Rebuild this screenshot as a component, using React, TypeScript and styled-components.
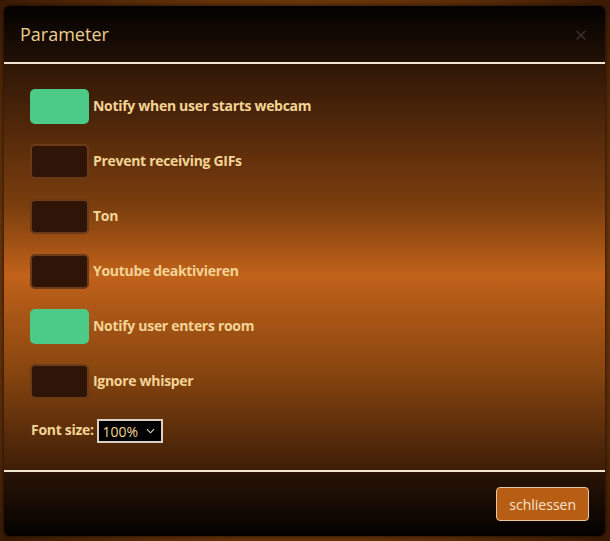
import { useState } from "react";
import styled, { createGlobalStyle } from "styled-components";

const GlobalStyle = createGlobalStyle`
  html, body {
    margin: 0;
    padding: 0;
  }
  body {
    background: radial-gradient(ellipse at 50% 50%, #b8621c 0%, #7a3e0c 60%, #3a1a04 100%);
    font-family: "Open Sans", "Liberation Sans", sans-serif;
  }
`;

const options = [
  { label: "Notify when user starts webcam", on: true },
  { label: "Prevent receiving GIFs", on: false },
  { label: "Ton", on: false },
  { label: "Youtube deaktivieren", on: false },
  { label: "Notify user enters room", on: true },
  { label: "Ignore whisper", on: false },
];

export default function App() {
  const [values, setValues] = useState(options.map((o) => o.on));

  function toggle(index: number) {
    setValues((prev) => prev.map((v, i) => (i === index ? !v : v)));
  }

  return (
    <>
      <GlobalStyle />
      <Page>
        <Modal>
          <Header>
            <Title>Parameter</Title>
            <Close>×</Close>
          </Header>

          <Body>
            {options.map((option, index) => (
              <Row key={option.label}>
                <Toggle $on={values[index]} onClick={() => toggle(index)} />
                <Label>{option.label}</Label>
              </Row>
            ))}

            <FontRow>
              <Label>Font size:</Label>
              <SelectWrap>
                <Select defaultValue="100%">
                  <option>80%</option>
                  <option>90%</option>
                  <option>100%</option>
                  <option>110%</option>
                  <option>120%</option>
                </Select>
                <Chevron viewBox="0 0 10 6">
                  <path d="M1 1l4 4 4-4" fill="none" stroke="#e8dcc8" strokeWidth="1.2" />
                </Chevron>
              </SelectWrap>
            </FontRow>
          </Body>

          <Footer>
            <CloseButton>schliessen</CloseButton>
          </Footer>
        </Modal>
      </Page>
    </>
  );
}

const Page = styled.div`
  width: 610px;
  height: 541px;
  padding: 6px 5px 5px 4px;
  box-sizing: border-box;
`;

const Modal = styled.div`
  height: 100%;
  display: flex;
  flex-direction: column;
  border-radius: 6px;
  overflow: hidden;
  box-shadow: 0 0 4px rgba(0, 0, 0, 0.8);
  background: #2a1406;
`;

const Header = styled.div`
  height: 56px;
  display: flex;
  align-items: center;
  justify-content: space-between;
  padding: 0 16px;
  background: linear-gradient(to bottom, #030100, #221106);
  border-bottom: 2px solid #f3e6d0;
`;

const Title = styled.h4`
  margin: 0;
  font-size: 18px;
  font-weight: 400;
  color: #efcf8e;
`;

const Close = styled.span`
  font-size: 22px;
  color: #3c3026;
  line-height: 1;
  margin-right: 2px;
`;

const Body = styled.div`
  flex: 1;
  display: flex;
  flex-direction: column;
  gap: 20px;
  padding: 25px 26px 0;
  background: linear-gradient(
    to bottom,
    #2e1606 0%,
    #7c3e0e 35%,
    #c0621a 52%,
    #8a460f 75%,
    #3e1e07 100%
  );
`;

const Row = styled.div`
  display: flex;
  align-items: center;
  gap: 4px;
`;

const Toggle = styled.div<{ $on: boolean }>`
  width: 59px;
  height: 35px;
  box-sizing: border-box;
  border-radius: 5px;
  cursor: pointer;
  background: ${(p) => (p.$on ? "#4ccb88" : "#2e1507")};
  border: ${(p) => (p.$on ? "none" : "2px solid #6b3a18")};
`;

const Label = styled.span`
  font-size: 14px;
  font-weight: 700;
  color: #f3d495;
  letter-spacing: -0.3px;
  margin-bottom: 3px;
`;

const FontRow = styled.div`
  display: flex;
  align-items: center;
  gap: 3px;
  padding-left: 1px;
`;

const SelectWrap = styled.div`
  position: relative;
  display: flex;
`;

const Select = styled.select`
  appearance: none;
  height: 24px;
  width: 66px;
  background: #000;
  color: #f3d495;
  border: 2px solid #d8d0c4;
  font-family: "Open Sans", "Liberation Sans", sans-serif;
  font-size: 14px;
  padding: 0 4px;
  border-radius: 0;
`;

const Chevron = styled.svg`
  position: absolute;
  right: 8px;
  top: 9px;
  width: 9px;
  height: 6px;
  pointer-events: none;
`;

const Footer = styled.div`
  height: 64px;
  display: flex;
  align-items: center;
  justify-content: flex-end;
  padding: 0 16px;
  border-top: 2px solid #f3e6d0;
  background: linear-gradient(to bottom, #2a1406, #030100);
`;

const CloseButton = styled.button`
  height: 34px;
  padding: 0 12px;
  background: #b85d14;
  border: 1px solid #e8c8a0;
  border-radius: 4px;
  color: #f6e6d0;
  font-family: "Open Sans", "Liberation Sans", sans-serif;
  font-size: 14px;
  cursor: pointer;
`;
